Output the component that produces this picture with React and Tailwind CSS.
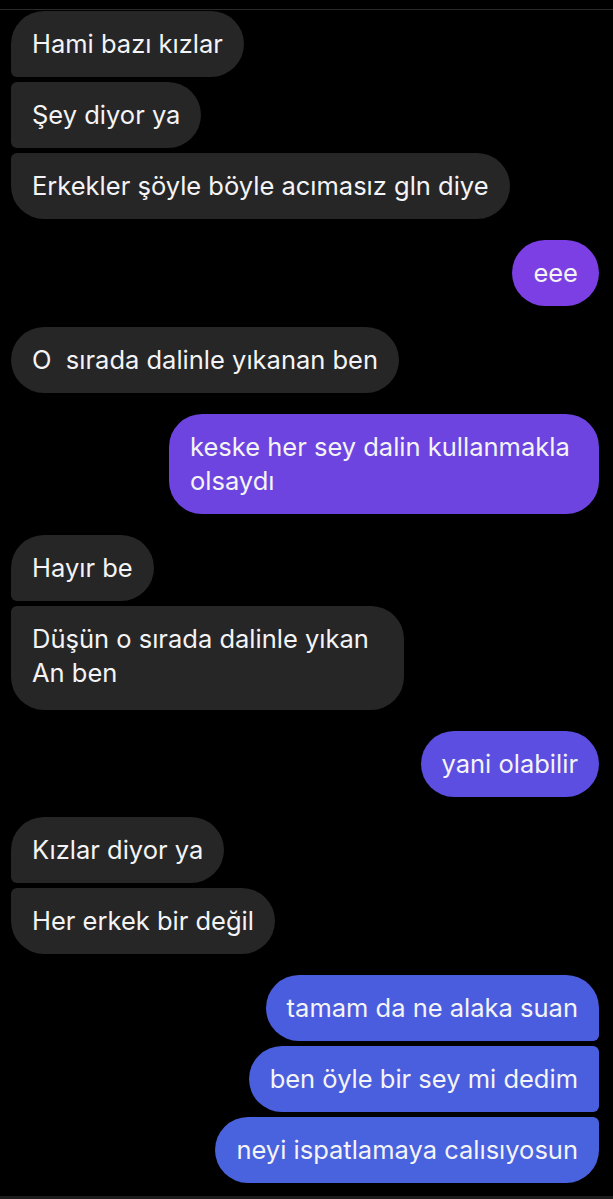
import React from 'react';

const messages = [
  { group: 'in', items: ['Hami bazı kızlar', 'Şey diyor ya', 'Erkekler şöyle böyle acımasız gln diye'] },
  { group: 'out', items: [{ text: 'eee', bg: 'bg-[#7b3fe3]' }] },
  { group: 'in', items: ['O  sırada dalinle yıkanan ben'] },
  { group: 'out', items: [{ text: 'keske her sey dalin kullanmakla olsaydı', bg: 'bg-[#6d44e0]' }] },
  {
    group: 'in',
    items: ['Hayır be', { text: 'Düşün o sırada dalinle yıkan\nAn ben', extra: 'w-[393px] pb-5' }],
  },
  { group: 'out', items: [{ text: 'yani olabilir', bg: 'bg-[#5b4ee0]' }], after: 'mb-[-1px]' },
  { group: 'in', items: ['Kızlar diyor ya', 'Her erkek bir değil'] },
  {
    group: 'out',
    items: [
      { text: 'tamam da ne alaka suan', bg: 'bg-[#4b5ddf]' },
      { text: 'ben öyle bir sey mi dedim', bg: 'bg-[#4a5fde]' },
      { text: 'neyi ispatlamaya calısıyosun', bg: 'bg-[#4962de]' },
    ],
  },
];

const inCorners = (i, n) => {
  if (n === 1) return 'rounded-[33px]';
  if (i === 0) return 'rounded-[33px] rounded-bl-[6px]';
  if (i === n - 1) return 'rounded-[33px] rounded-tl-[6px]';
  return 'rounded-[33px] rounded-tl-[6px] rounded-bl-[6px]';
};

const outCorners = (i, n) => {
  if (n === 1) return 'rounded-[33px]';
  if (i === 0) return 'rounded-[33px] rounded-br-[6px]';
  if (i === n - 1) return 'rounded-[33px] rounded-tr-[6px]';
  return 'rounded-[33px] rounded-tr-[6px] rounded-br-[6px]';
};

const Bubble = ({ text, className }) => (
  <div
    className={`px-[21px] py-4 text-[25.5px] leading-[34px] text-[#f4f4f6] whitespace-pre-wrap ${className}`}
  >
    {text}
  </div>
);

export default function App() {
  return (
    <div
      className="w-[613px] h-[1199px] overflow-hidden bg-black flex flex-col"
      style={{ fontFamily: 'Inter, "Liberation Sans", sans-serif' }}
    >
      <div className="h-[9px] border-b border-[#2a2a2a] box-content shrink-0" />
      <div className="flex flex-col gap-[21px] pl-[11px] pr-[14px] pt-px">
        {messages.map((g, gi) =>
          g.group === 'in' ? (
            <div key={gi} className={`flex flex-col items-start gap-[5px] ${g.after || ''}`}>
              {g.items.map((t, i) => {
                const m = typeof t === 'string' ? { text: t, extra: '' } : t;
                return (
                  <Bubble
                    key={i}
                    text={m.text}
                    className={`bg-[#262626] ${m.extra} ${inCorners(i, g.items.length)}`}
                  />
                );
              })}
            </div>
          ) : (
            <div key={gi} className={`flex flex-col items-end gap-[5px] ${g.after || ''}`}>
              {g.items.map((m, i) => (
                <Bubble
                  key={i}
                  text={m.text}
                  className={`${m.bg} max-w-[430px] ${outCorners(i, g.items.length)}`}
                />
              ))}
            </div>
          )
        )}
      </div>
      <div className="mt-auto h-[3px] bg-[#1c1c1c] shrink-0" />
    </div>
  );
}
